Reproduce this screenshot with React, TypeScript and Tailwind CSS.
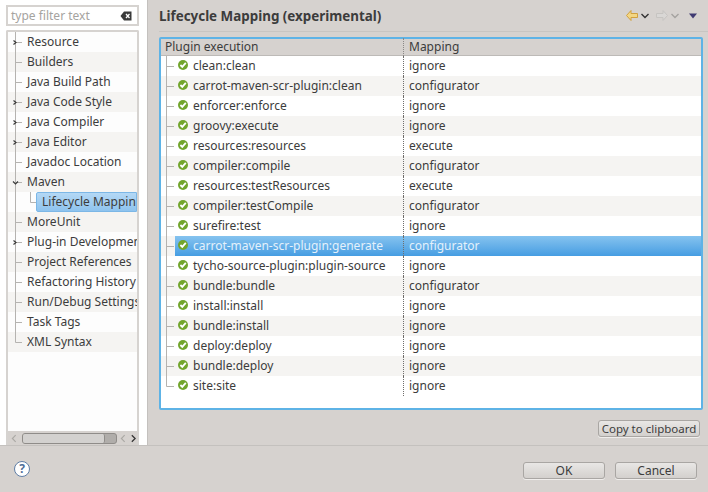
import React from 'react';

const uiFont = 'font-["Noto_Sans",sans-serif]';

const prefs = [
  { label: 'Resource', arrow: 'right' },
  { label: 'Builders' },
  { label: 'Java Build Path' },
  { label: 'Java Code Style', arrow: 'right' },
  { label: 'Java Compiler', arrow: 'right' },
  { label: 'Java Editor', arrow: 'right' },
  { label: 'Javadoc Location' },
  { label: 'Maven', arrow: 'down' },
  { label: 'Lifecycle Mapping', child: true },
  { label: 'MoreUnit' },
  { label: 'Plug-in Development', arrow: 'right' },
  { label: 'Project References' },
  { label: 'Refactoring History' },
  { label: 'Run/Debug Settings' },
  { label: 'Task Tags' },
  { label: 'XML Syntax', last: true },
];

const executions = [
  ['clean:clean', 'ignore'],
  ['carrot-maven-scr-plugin:clean', 'configurator'],
  ['enforcer:enforce', 'ignore'],
  ['groovy:execute', 'ignore'],
  ['resources:resources', 'execute'],
  ['compiler:compile', 'configurator'],
  ['resources:testResources', 'execute'],
  ['compiler:testCompile', 'configurator'],
  ['surefire:test', 'ignore'],
  ['carrot-maven-scr-plugin:generate', 'configurator'],
  ['tycho-source-plugin:plugin-source', 'ignore'],
  ['bundle:bundle', 'configurator'],
  ['install:install', 'ignore'],
  ['bundle:install', 'ignore'],
  ['deploy:deploy', 'ignore'],
  ['bundle:deploy', 'ignore'],
  ['site:site', 'ignore'],
];

const CheckIcon = () => (
  <svg width="10" height="10" viewBox="0 0 10 10" className="mb-[2px] shrink-0">
    <circle cx="5" cy="5" r="5" fill="#72a52c" />
    <path d="M2.4 5 L4.3 6.9 L7.8 2.9" fill="none" stroke="#fff" strokeWidth="1.8" />
  </svg>
);

const Guide = ({ last, arrow }: { last?: boolean; arrow?: string }) => (
  <svg width="23" height="20" viewBox="0 0 23 20" className="shrink-0">
    <path d={last ? 'M7.5 0 V10.5 H14' : 'M7.5 0 V20 M7.5 10.5 H14'} fill="none" stroke="#b5b3b0" strokeWidth="1" />
    {arrow === 'right' && <path d="M5.5 8.5 L8 10.5 L5.5 12.5" fill="none" stroke="#3a3a3a" strokeWidth="1.2" />}
    {arrow === 'down' && <path d="M5 9.5 L7.5 12 L10 9.5" fill="none" stroke="#3a3a3a" strokeWidth="1.2" />}
  </svg>
);

const Button = ({ label, className }: { label: string; className: string }) => (
  <button className={`h-[17px] whitespace-nowrap rounded-[3px] border border-[#a9a6a3] bg-gradient-to-b from-[#e9e7e5] to-[#d3d0cd] leading-none text-[#3c3c3c] shadow-[0_1px_0_#f0eeec] ${className}`}>
    {label}
  </button>
);

export default function App() {
  return (
    <div className={`flex h-[492px] w-[708px] flex-col overflow-hidden bg-[#d6d2cf] ${uiFont} text-[12px] text-[#3c3c3c]`}>
      <div className="flex h-[445px] min-h-0">
        {/* preference tree */}
        <div className="flex w-[147px] shrink-0 flex-col bg-white pl-[6px] pr-[8px] pt-[5px]">
          <div className="flex h-[21px] items-center justify-between border-2 border-[#d6d3d0] pl-[3px] pr-[5px] text-[#a5a3a0]">
            <span>type filter text</span>
            <svg width="12" height="10" viewBox="0 0 12 10">
              <path d="M4 0.5 H11.5 V9.5 H4 L0.5 5 Z" fill="#3a3a3a" />
              <path d="M6 3 L9.5 7 M9.5 3 L6 7" stroke="#fff" strokeWidth="1.3" />
            </svg>
          </div>
          <div className="mt-[4px] flex min-h-0 flex-1 flex-col rounded-t-[2px] border-x-2 border-t-2 border-[#d6d3d0]">
            <div className="min-h-0 flex-1 overflow-hidden bg-[#fdfdfd]">
              {prefs.map((p, i) => (
                <div key={p.label} className={`flex h-5 items-center overflow-hidden whitespace-nowrap ${i % 2 ? 'bg-[#f5f4f2]' : ''}`}>
                  {p.child ? (
                    <>
                      <svg width="28" height="20" viewBox="0 0 28 20" className="shrink-0">
                        <path d="M22.5 0 V10.5 H28" fill="none" stroke="#b5b3b0" />
                        <path d="M7.5 0 V20" fill="none" stroke="#b5b3b0" />
                      </svg>
                      <div className="flex h-5 flex-1 items-center overflow-hidden rounded-l-[2px] border border-[#7cb7e6] bg-gradient-to-b from-[#b4d8f5] to-[#8ec3ee] pl-[5px] text-[#3c3c3c]">
                        {p.label}
                      </div>
                    </>
                  ) : (
                    <>
                      <Guide arrow={p.arrow} last={p.last} />
                      <span className="-ml-[5px] pl-[1px]">{p.label}</span>
                    </>
                  )}
                </div>
              ))}
            </div>
            <div className="flex h-[14px] items-center bg-[#d6d2cf] pl-[1px]">
              <svg width="9" height="9" viewBox="0 0 9 9" className="mx-[1px]">
                <path d="M6 1 L2.5 4.5 L6 8" fill="none" stroke="#aaa8a5" strokeWidth="1.2" />
              </svg>
              <div className="ml-[2px] h-[11px] w-[101px] rounded-[3px] border border-[#8f8c89] bg-[#b0adaa]">
                <div className="h-full w-[82px] rounded-[2px] border-r border-[#8f8c89] bg-[#d3d1cf]" />
              </div>
              <svg width="9" height="9" viewBox="0 0 9 9" className="ml-[2px]">
                <path d="M6 1 L2.5 4.5 L6 8" fill="none" stroke="#aaa8a5" strokeWidth="1.2" />
              </svg>
              <svg width="9" height="9" viewBox="0 0 9 9" className="ml-[1px]">
                <path d="M3 1 L6.5 4.5 L3 8" fill="none" stroke="#333" strokeWidth="1.3" />
              </svg>
            </div>
          </div>
        </div>

        {/* sash */}
        <div className="w-[12px] shrink-0 border-l border-[#c4c1be] bg-[#d6d2cf]" />

        {/* property page */}
        <div className="flex min-w-0 flex-1 flex-col">
          <div className="flex h-[32px] shrink-0 items-center justify-between border-b border-[#c8c5c2] pr-[11px]">
            <h1 className="mt-[2px] text-[13.4px] font-bold text-[#3c3c3c]">Lifecycle Mapping (experimental)</h1>
            <div className="flex items-center">
              <svg width="12" height="11" viewBox="0 0 12 11">
                <path d="M0.5 5.5 L5 0.5 V3.5 H11.5 V7.5 H5 V10.5 Z" fill="#f3d683" stroke="#d0a040" />
              </svg>
              <svg width="8" height="6" viewBox="0 0 8 6" className="ml-[3px]">
                <path d="M0.5 1 L4 4.5 L7.5 1" fill="none" stroke="#333" strokeWidth="1.4" />
              </svg>
              <svg width="12" height="11" viewBox="0 0 12 11" className="ml-[7px]">
                <path d="M11.5 5.5 L7 0.5 V3.5 H0.5 V7.5 H7 V10.5 Z" fill="#d9d7d5" stroke="#c6c4c1" />
              </svg>
              <svg width="8" height="6" viewBox="0 0 8 6" className="ml-[3px]">
                <path d="M0.5 1 L4 4.5 L7.5 1" fill="none" stroke="#a5a3a0" strokeWidth="1.4" />
              </svg>
              <svg width="8" height="6" viewBox="0 0 8 6" className="ml-[10px]">
                <path d="M0 0.5 H8 L4 5.5 Z" fill="#3f3a72" />
              </svg>
            </div>
          </div>

          <div className="mr-[5px] mt-[5px] flex h-[373px] shrink-0 flex-col rounded-[2px] border-2 border-[#5eb3e6] bg-white">
            <div className="flex h-[17px] shrink-0 items-center border-b border-[#bdbab7] bg-[#d6d2cf]">
              <span className="w-[242px] pl-[4px]">Plugin execution</span>
              <span className="border-l border-dotted border-[#8a8886] pl-[5px]">Mapping</span>
            </div>
            {executions.map(([name, mapping], i) => {
              const selected = name === 'carrot-maven-scr-plugin:generate';
              return (
                <div key={name} className={`flex h-5 shrink-0 items-center whitespace-nowrap ${i % 2 ? 'bg-[#f5f4f2]' : ''}`}>
                  <svg width="14" height="20" viewBox="0 0 14 20" className="shrink-0">
                    <path d={i === executions.length - 1 ? 'M5.5 0 V10.5 H13' : 'M5.5 0 V20 M5.5 10.5 H13'} fill="none" stroke="#b5b3b0" />
                  </svg>
                  <div className={`flex h-5 flex-1 items-center ${selected ? 'bg-gradient-to-b from-[#85c3ef] to-[#459de2] text-[#e4f1fb]' : ''}`}>
                    <div className="flex w-[228px] items-center overflow-hidden pl-[3px]">
                      <CheckIcon />
                      <span className="ml-[5px]">{name}</span>
                    </div>
                    <span className="flex h-5 items-center border-l border-dotted border-[#6f6d6b] pl-[5px]">{mapping}</span>
                  </div>
                </div>
              );
            })}
          </div>

          <div className="mr-[8px] mt-[10px] flex justify-end">
            <Button label="Copy to clipboard" className="w-[102px] text-[11.5px]" />
          </div>
        </div>
      </div>

      {/* dialog buttons */}
      <div className="flex min-h-0 flex-1 items-center justify-between border-t border-[#c4c1be] pl-[14px] pr-[11px]">
        <div className="flex h-4 w-4 items-center justify-center rounded-full border border-[#5f7ea6] bg-white text-[12px] font-bold text-[#4f6f99]">?</div>
        <div className="mt-[3px] flex gap-[10px]">
          <Button label="OK" className="w-[82px]" />
          <Button label="Cancel" className="w-[82px]" />
        </div>
      </div>
    </div>
  );
}
